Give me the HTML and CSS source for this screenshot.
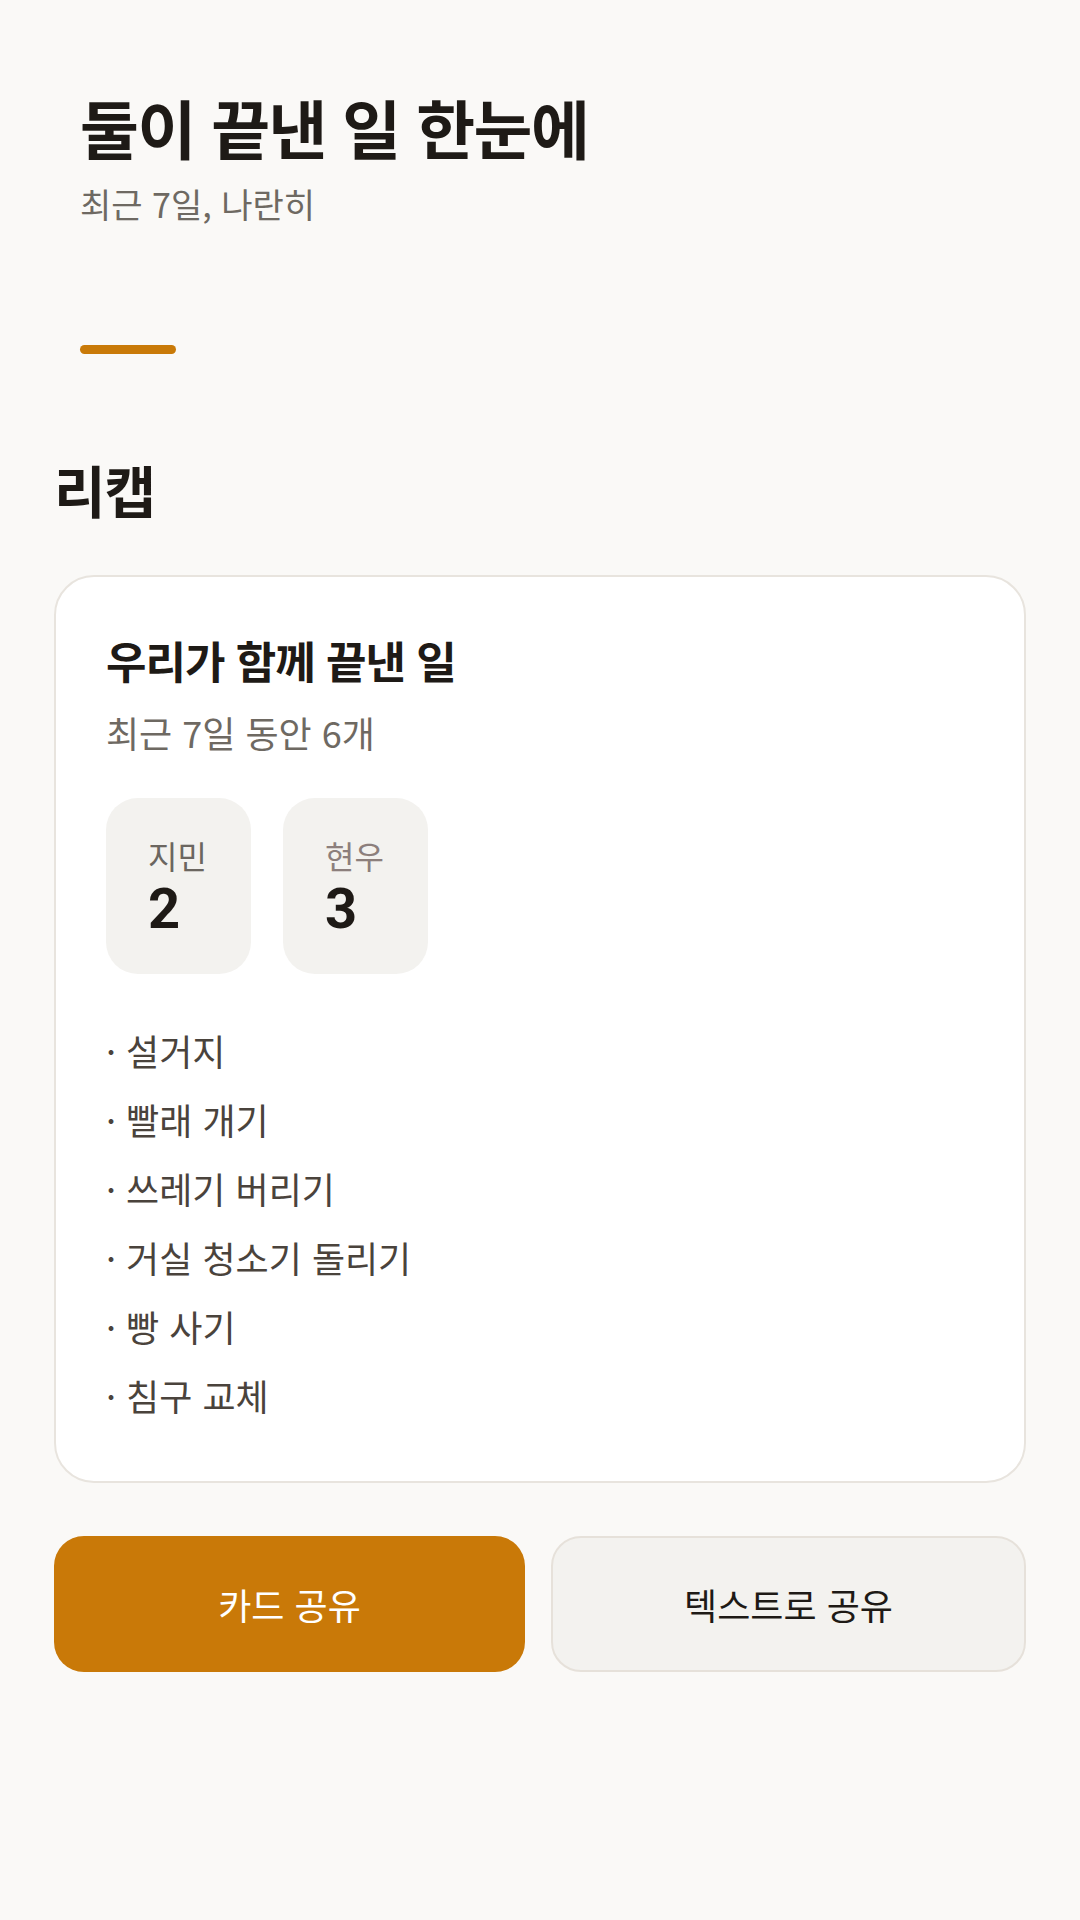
FILE: index.html
```html
<!DOCTYPE html>
<html lang="ko">

	<head>
		<meta charset="UTF-8">
		<title>리캡</title>
		<link rel="stylesheet" href="styles.css">
	</head>

	<body>
		<main id="page">
			<header class="hero">
				<h1 class="hero-title">둘이 끝낸 일 한눈에</h1>
				<p class="hero-sub">최근 7일, 나란히</p>
				<span class="hero-bar"></span>
			</header>

			<section class="recap">
				<h2 class="recap-title">리캡</h2>

				<div class="card">
					<h3 class="card-title">우리가 함께 끝낸 일</h3>
					<p class="card-sub">최근 7일 동안 6개</p>

					<div class="stats">
						<div class="stat">
							<span class="stat-name">지민</span>
							<span class="stat-num">2</span>
						</div>
						<div class="stat">
							<span class="stat-name stat-name-b">현우</span>
							<span class="stat-num">3</span>
						</div>
					</div>

					<ul class="done-list">
						<li>· 설거지</li>
						<li>· 빨래 개기</li>
						<li>· 쓰레기 버리기</li>
						<li>· 거실 청소기 돌리기</li>
						<li>· 빵 사기</li>
						<li>· 침구 교체</li>
					</ul>
				</div>

				<div class="actions">
					<a class="btn btn-main" href="javascript:;">카드 공유</a>
					<a class="btn btn-sub" href="javascript:;">텍스트로 공유</a>
				</div>
			</section>
		</main>
	</body>

</html>
```

FILE: styles.css
```css
html,
body {
	margin: 0;
	padding: 0;
}

body {
	background: #faf9f7;
	color: #1e1a16;
	font-family: "Noto Sans CJK KR", "Noto Sans", sans-serif;
}

h1,
h2,
h3,
p,
ul,
li {
	margin: 0;
	padding: 0;
	list-style: none;
}

a {
	text-decoration: none;
}

#page {
	padding: 0 54px;
}

/* 상단 */
.hero {
	padding: 86px 0 0 26px;
	display: flex;
	flex-direction: column;
	align-items: flex-start;
}

.hero-title {
	font-size: 64px;
	line-height: 80px;
	font-weight: 700;
	letter-spacing: -1.5px;
}

.hero-sub {
	margin-top: 15px;
	font-size: 34px;
	line-height: 46px;
	color: #6e6962;
}

.hero-bar {
	margin-top: 118px;
	width: 96px;
	height: 9px;
	border-radius: 5px;
	background: #c97a08;
}

/* 리캡 */
.recap {
	padding-top: 100px;
}

.recap-title {
	font-size: 56px;
	line-height: 70px;
	font-weight: 700;
	letter-spacing: -1px;
}

.card {
	margin-top: 51px;
	background: #fff;
	border: 2px solid #e8e4de;
	border-radius: 40px;
	padding: 55px 50px 61px;
}

.card-title {
	font-size: 44px;
	line-height: 57px;
	font-weight: 700;
	letter-spacing: -1px;
}

.card-sub {
	margin-top: 18px;
	font-size: 36px;
	line-height: 50px;
	color: #6e6962;
}

.stats {
	margin-top: 41px;
	display: flex;
	gap: 32px;
}

.stat {
	width: 145px;
	box-sizing: border-box;
	padding: 38px 42px 34px;
	background: #f3f2ef;
	border-radius: 32px;
	display: flex;
	flex-direction: column;
}

.stat-name {
	font-size: 32px;
	line-height: 38px;
	color: #6b6660;
}

.stat-name-b {
	color: #8c7f7c;
}

.stat-num {
	margin-top: 4px;
	font-family: Roboto, "Noto Sans CJK KR", sans-serif;
	font-size: 56px;
	line-height: 62px;
	font-weight: 700;
}

.done-list {
	margin-top: 52px;
	display: flex;
	flex-direction: column;
	gap: 20px;
}

.done-list li {
	font-size: 36px;
	line-height: 49px;
	color: #4a433c;
}

/* 버튼 */
.actions {
	margin-top: 53px;
	display: flex;
	gap: 26px;
}

.btn {
	flex: 1;
	height: 136px;
	box-sizing: border-box;
	border-radius: 30px;
	display: flex;
	align-items: center;
	justify-content: center;
	font-size: 36px;
}

.btn-main {
	background: #c97908;
	color: #fff;
}

.btn-sub {
	background: #f3f2ef;
	border: 2px solid #e6e1da;
	color: #1e1a16;
}
```
